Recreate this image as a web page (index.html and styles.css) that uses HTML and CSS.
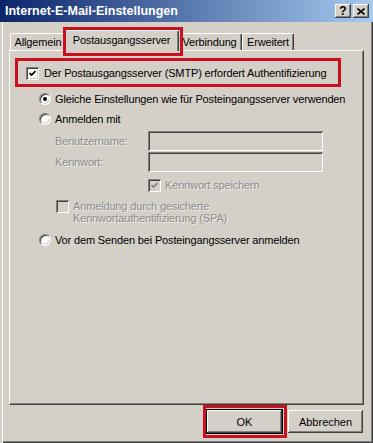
FILE: index.html
```html
<!DOCTYPE html>
<html lang="de">
<head>
    <meta charset="UTF-8">
    <title>Internet-E-Mail-Einstellungen</title>
    <link rel="stylesheet" href="styles.css">
</head>
<body>
    <div class="window">
        <div class="titlebar">
            <span class="title">Internet-E-Mail-Einstellungen</span>
            <div class="caption-buttons">
                <span class="cap-btn">?</span>
                <span class="cap-btn">
                    <svg width="8" height="7" viewBox="0 0 8 7"><path d="M0.5 0.5 L7.5 6.5 M7.5 0.5 L0.5 6.5" stroke="#000" stroke-width="1.6"/></svg>
                </span>
            </div>
        </div>

        <div class="content">
            <div class="tabs">
                <div class="tab tab-general">Allgemein</div>
                <div class="tab tab-active">Postausgangsserver</div>
                <div class="tab tab-connection">Verbindung</div>
                <div class="tab tab-advanced">Erweitert</div>
            </div>

            <div class="panel">
                <div class="row auth-row">
                    <span class="check">
                        <svg width="7" height="7" viewBox="0 0 7 7"><path d="M0.5 3 L2.5 5 L6.5 1" fill="none" stroke="#000" stroke-width="1.7"/></svg>
                    </span>
                    <span>Der Postausgangsserver (SMTP) erfordert Authentifizierung</span>
                </div>

                <div class="options">
                    <div class="row radio-row">
                        <span class="radio selected"></span>
                        <span>Gleiche Einstellungen wie für Posteingangsserver verwenden</span>
                    </div>
                    <div class="row radio-row">
                        <span class="radio"></span>
                        <span>Anmelden mit</span>
                    </div>

                    <div class="login">
                        <div class="field-row">
                            <span class="field-label disabled">Benutzername:</span>
                            <span class="field"></span>
                        </div>
                        <div class="field-row field-row-second">
                            <span class="field-label disabled">Kennwort:</span>
                            <span class="field"></span>
                        </div>
                        <div class="row save-row">
                            <span class="check check-disabled">
                                <svg width="7" height="7" viewBox="0 0 7 7"><path d="M0.5 3 L2.5 5 L6.5 1" fill="none" stroke="#808080" stroke-width="1.7"/></svg>
                            </span>
                            <span class="disabled">Kennwort speichern</span>
                        </div>
                        <div class="row spa-row">
                            <span class="check check-disabled"></span>
                            <span class="disabled spa-label">Anmeldung durch gesicherte<br>Kennwortauthentifizierung (SPA)</span>
                        </div>
                    </div>

                    <div class="row radio-row last-radio">
                        <span class="radio"></span>
                        <span>Vor dem Senden bei Posteingangsserver anmelden</span>
                    </div>
                </div>
            </div>

            <div class="actions">
                <button class="btn btn-default">OK</button>
                <button class="btn">Abbrechen</button>
            </div>
        </div>

        <!-- red highlight frames drawn over the dialog -->
        <div class="mark mark-tab"></div>
        <div class="mark mark-auth"></div>
        <div class="mark mark-ok"></div>
    </div>
</body>
</html>
```

FILE: styles.css
```css
* {
    box-sizing: border-box;
}
html, body {
    margin: 0;
    padding: 0;
}
body {
    font-family: 'Liberation Sans', Arial, sans-serif;
    font-size: 11px;
    letter-spacing: -0.15px;
    color: #000;
    background-color: #d4d0c8;
}
.window {
    position: relative;
    width: 373px;
    height: 443px;
    overflow: hidden;
    background-color: #d4d0c8;
    display: flex;
    flex-direction: column;
    box-shadow: inset 2px 0 #d4d0c8, inset 3px 0 #fff, inset -1px -1px #404040, inset -2px -2px #808080;
}
.titlebar {
    height: 22px;
    flex: none;
    display: flex;
    align-items: center;
    padding: 0 4px 0 5px;
    background: linear-gradient(to right, #0a246a, #a6caf0);
    color: #fff;
    font-weight: bold;
    font-size: 12.5px;
    letter-spacing: 0;
}
.caption-buttons {
    margin-left: auto;
    display: flex;
    gap: 2px;
}
.cap-btn {
    width: 16px;
    height: 14px;
    display: flex;
    align-items: center;
    justify-content: center;
    background-color: #d4d0c8;
    color: #000;
    font-size: 12px;
    font-weight: bold;
    box-shadow: inset -1px -1px #404040, inset 1px 1px #fff, inset -2px -2px #808080;
}
.content {
    flex: 1;
    padding: 8px 9px 0 9px;
}
.tabs {
    display: flex;
    align-items: flex-end;
    height: 20px;
    padding-left: 1px;
    position: relative;
    z-index: 1;
}
.tab {
    height: 17px;
    display: flex;
    align-items: center;
    justify-content: center;
    background-color: #d4d0c8;
    border-top: 1px solid #fff;
    border-left: 1px solid #fff;
    border-right: 1px solid #404040;
    border-radius: 2px 2px 0 0;
    box-shadow: inset -1px 0 #808080;
}
.tab-general {
    width: 56px;
}
.tab-active {
    width: 115px;
    height: 21px;
    margin: 0 -2px -1px -2px;
    position: relative;
    z-index: 2;
    padding-bottom: 2px;
}
.tab-connection {
    width: 65px;
}
.tab-advanced {
    width: 52px;
}
.panel {
    height: 355px;
    padding: 12px 0 0 16px;
    border-top: 1px solid #fff;
    border-left: 1px solid #fff;
    border-right: 1px solid #404040;
    border-bottom: 1px solid #404040;
    box-shadow: inset -1px -1px #808080;
}
.row {
    display: flex;
    align-items: center;
}
.auth-row {
    height: 20px;
    gap: 5px;
}
.check {
    width: 13px;
    height: 13px;
    flex: none;
    display: flex;
    align-items: center;
    justify-content: center;
    background-color: #fff;
    box-shadow: inset 1px 1px #808080, inset -1px -1px #fff, inset 2px 2px #404040, inset -2px -2px #d4d0c8;
}
.check-disabled {
    background-color: #d4d0c8;
}
.options {
    margin-left: 13px;
    margin-top: 6px;
}
.radio-row {
    height: 20px;
    gap: 4px;
}
.radio {
    width: 12px;
    height: 12px;
    flex: none;
    border-radius: 50%;
    background-color: #fff;
    border: 1px solid;
    border-color: #808080 #fff #fff #808080;
    box-shadow: inset 1px 1px #404040, inset -1px -1px #d4d0c8;
    position: relative;
}
.radio.selected::after {
    content: '';
    position: absolute;
    left: 3px;
    top: 3px;
    width: 4px;
    height: 4px;
    border-radius: 50%;
    background-color: #000;
}
.login {
    margin-left: 16px;
}
.field-row {
    display: flex;
    align-items: center;
    margin-top: 2px;
    height: 20px;
}
.field-row-second {
    margin-top: 1px;
}
.field-label {
    width: 93px;
    flex: none;
}
.field {
    width: 175px;
    height: 20px;
    background-color: #d4d0c8;
    box-shadow: inset 1px 1px #808080, inset -1px -1px #fff, inset 2px 2px #404040, inset -2px -2px #d4d0c8;
}
.disabled {
    color: #8d8d8d;
    text-shadow: 1px 1px rgba(255, 255, 255, 0.6);
}
.save-row {
    height: 16px;
    margin-top: 5px;
    margin-left: 93px;
    gap: 4px;
}
.spa-row {
    align-items: flex-start;
    margin-top: 7px;
    margin-left: 1px;
    gap: 4px;
}
.spa-label {
    line-height: 12px;
}
.last-radio {
    margin-top: 6px;
}
.actions {
    display: flex;
    justify-content: flex-end;
    align-items: center;
    gap: 5px;
    margin-top: 4px;
    margin-right: 1px;
}
.btn {
    width: 75px;
    height: 23px;
    padding: 0;
    border: none;
    font-family: 'Liberation Sans', Arial, sans-serif;
    font-size: 11px;
    color: #000;
    background-color: #d4d0c8;
    box-shadow: inset -1px -1px #404040, inset 1px 1px #fff, inset -2px -2px #808080;
}
.btn-default {
    width: 77px;
    height: 25px;
    border: 1px solid #000;
}
.mark {
    position: absolute;
    border: 3px solid #c8101e;
    z-index: 5;
}
.mark-tab {
    left: 63px;
    top: 27px;
    width: 120px;
    height: 29px;
}
.mark-auth {
    left: 15px;
    top: 58px;
    width: 326px;
    height: 29px;
}
.mark-ok {
    left: 203px;
    top: 405px;
    width: 84px;
    height: 33px;
}
```
